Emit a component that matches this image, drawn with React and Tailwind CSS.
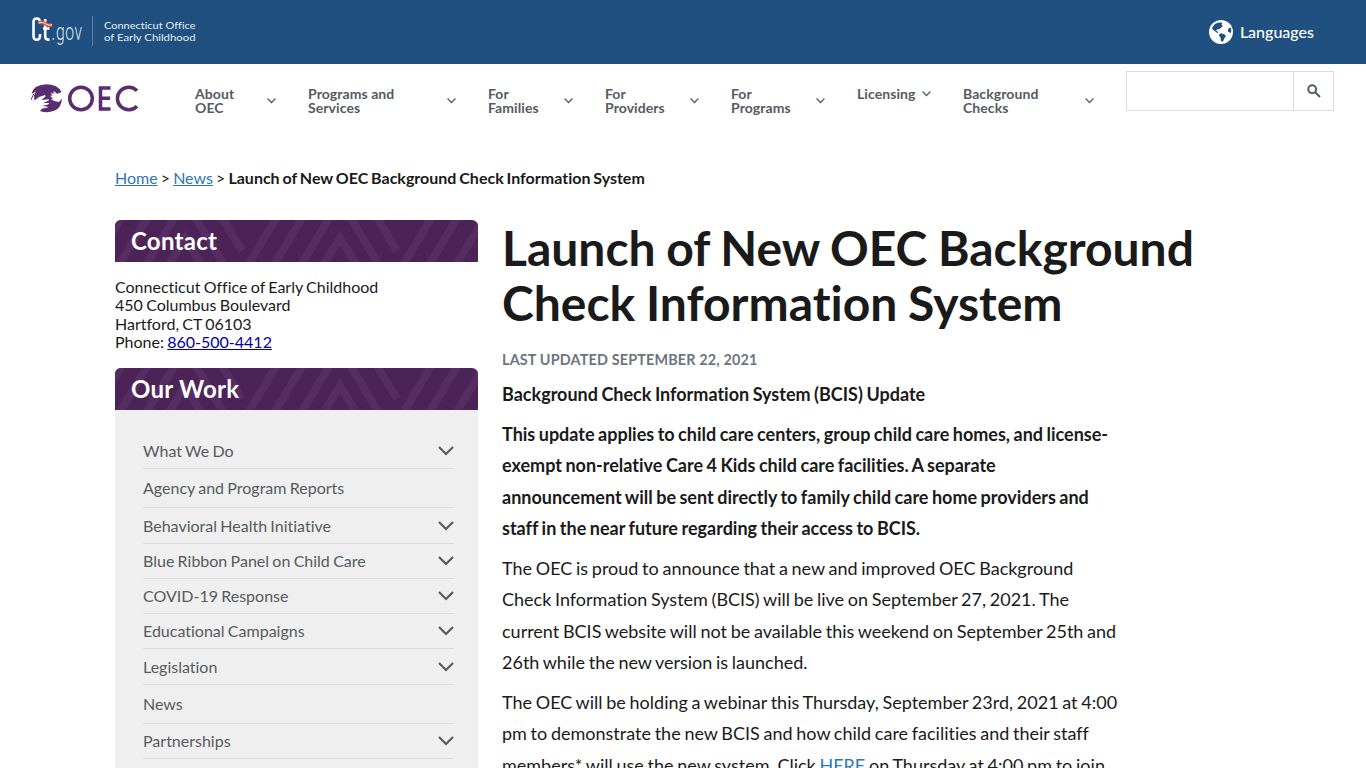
import React from "react";

const navItems = [
  { lines: ["About", "OEC"], width: "w-[81px]" },
  { lines: ["Programs and", "Services"], width: "w-[148px]" },
  { lines: ["For", "Families"], width: "w-[85px]" },
  { lines: ["For", "Providers"], width: "w-[94px]" },
  { lines: ["For", "Programs"], width: "w-[94px]" },
  { lines: ["Licensing"], width: "w-[74px]" },
  { lines: ["Background", "Checks"], width: "w-[131px]" },
];

const workItems = [
  { label: "What We Do", height: "h-[36px]", open: true },
  { label: "Agency and Program Reports", height: "h-[39px]" },
  { label: "Behavioral Health Initiative", height: "h-[36px]", open: true },
  { label: "Blue Ribbon Panel on Child Care", height: "h-[35px]", open: true },
  { label: "COVID-19 Response", height: "h-[35px]", open: true },
  { label: "Educational Campaigns", height: "h-[35px]", open: true },
  { label: "Legislation", height: "h-[36px]", open: true },
  { label: "News", height: "h-[39px]" },
  { label: "Partnerships", height: "h-[35px]", open: true },
  { label: "Press Room", height: "h-[39px]" },
];

const CtLogo = () => (
  <svg width="166" height="34" viewBox="0 0 166 34" fill="none">
    {/* Ct mark */}
    <g stroke="#fff" strokeWidth="2.6">
      <path d="M9 8V6Q9 2.500 5.700 2.500Q2.500 2.500 2.500 6V20Q2.500 23.800 5.700 23.800Q9 23.800 9 20V18" />
      <path d="M14.200 3V20Q14.200 23.600 17 23.600H18.500M12 12.500H18.500" />
    </g>
    <path d="M8 6.800Q11.500 5.500 14.500 7.800Q17.500 10 21 8.800" stroke="#e8483f" strokeWidth="3.600" />
    <path d="M8 6.800Q11.500 5.500 14.500 7.800Q17.500 10 21 8.800" stroke="#fff" strokeWidth="0.900" />
    <g transform="translate(20.500 24) scale(0.68 1)">
      <text fill="#dbe6f0" fontSize="23" fontWeight="300" textLength="45" className="font-['Roboto']">.gov</text>
    </g>
    <path d="M61.500 0V30" stroke="#5c7fa3" />
    <text x="73" y="13" fill="#e6edf5" fontSize="10" textLength="91.500" lengthAdjust="spacingAndGlyphs" className="font-['Lato']">Connecticut Office</text>
    <text x="73" y="24.500" fill="#e6edf5" fontSize="10" textLength="91.500" lengthAdjust="spacingAndGlyphs" className="font-['Lato']">of Early Childhood</text>
  </svg>
);

const OecLogo = () => (
  <svg width="108" height="30" viewBox="0 0 108 30" fill="none">
    {/* left hand with its wrist, cut out by the white fingers */}
    <path d="M0.500 10Q2 1 15 0.200Q27 0.500 30.500 8L26 10L23 9L21.500 10.500L20.500 13L23 17L28 18L30.800 14.500Q30.500 27.500 16 28.200Q12 28.200 9 27Q9.500 25.500 11.500 24.500L17 23.500L16 22.500L11 22L17 20.500L18.500 19L12 19L17.500 16.800L18 15.200L10.500 16L14.500 12.500L14 11L8 13L3.500 16.500L3 11.500L5 7.500Z" fill="#5a2d73" />
    <path d="M0 16L1 13.500L3 9.500" stroke="#5a2d73" strokeWidth="1" />
    <path d="M20.500 9.500L26 13L31 12M20 12L24 14.500M21 15.500L26 16.500M23 8L27 11.500" stroke="#fff" strokeWidth="1.200" strokeLinecap="round" />
    <g stroke="#5a2d73" strokeWidth="3.500">
      <circle cx="50" cy="14.500" r="11.300" />
      <path d="M79.500 4H69.500V25H79.500M69.500 14.300H79" />
      <path d="M106 6.800A11.300 11.300 0 1 0 106 22.200" />
    </g>
  </svg>
);

const Globe = () => (
  <svg width="24" height="24" viewBox="0 0 24 24">
    <circle cx="12" cy="12" r="12" fill="#fff" />
    <path
      fill="#20507f"
      d="M3.300 7.500L6 4L9.500 2.500L13.500 2.800L12.500 4.500L13.800 6L12 7.800L10 9.300L8.500 9.200L7 10.500L8.500 11.500L9.500 13L8 12.800L5 10.600L3.500 9.500ZM10.500 14L12.500 13.200L15.500 14.500L17 16L15.500 18L14.500 20.500L13 22L11.800 20.500L11.500 17.500L10 15.500ZM18.800 9.800L20.500 7.800L21.800 8L22.300 10.500L21.800 13L20.500 12.600L19 11.500Z"
    />
  </svg>
);

const Chevron = ({ size, className }) => (
  <svg
    width={size}
    height={size * 0.625}
    viewBox="0 0 16 10"
    fill="none"
    stroke="#555b5e"
    strokeWidth="2.200"
    className={className}
  >
    <path d="M1 1L8 8L15 1" />
  </svg>
);

const PanelTitle = ({ children }) => (
  <div className="relative h-[42px] overflow-hidden rounded-t-md bg-[#4c2357] px-4">
    <svg className="absolute inset-0" width="363" height="42" fill="none" stroke="#562d62" strokeWidth="8">
      {[-310, -155, 0, 155].map((x) => (
        <path
          key={x}
          transform={`translate(${x} 0)`}
          d="M106 -4L127 31M162.500 -4L132.500 46M188.500 -4L158.500 46M215.500 -4L185.500 46M208 46L225 18L242 46M234.500 -4L264.500 46"
        />
      ))}
    </svg>
    <h2 className="relative text-2xl leading-[42px] font-bold tracking-[0.25px] text-white">{children}</h2>
  </div>
);

const Header = () => (
  <header>
    <div className="flex h-16 items-start justify-between bg-[#20507f] pr-[52px] pl-[31px]">
      <div className="pt-4">
        <CtLogo />
      </div>
      <div className="flex items-center gap-[7px] pt-5 text-base leading-6 text-white">
        <Globe />
        <span className="font-medium">Languages</span>
      </div>
    </div>

    <div className="flex h-[72px] items-start pl-[31px]">
      <div className="w-[164px] pt-5">
        <OecLogo />
      </div>
      <nav className="flex gap-8 pt-[23px]">
        {navItems.map((item) => (
          <a
            key={item.lines.join(" ")}
            className={`flex items-center justify-between text-sm leading-[14px] font-bold tracking-[0.08px] text-[#555b5e] ${item.width}`}
          >
            <span className="self-start whitespace-nowrap">
              {item.lines.map((line) => (
                <span key={line} className="block">{line}</span>
              ))}
            </span>
            <Chevron size={9} className={item.lines.length === 1 ? "mt-1 shrink-0 self-start" : "shrink-0"} />
          </a>
        ))}
      </nav>
      <div className="mt-[7px] ml-8 flex h-10 w-[208px] border border-[#dcdcdc]">
        <input className="w-[166px] outline-none" aria-label="Search" />
        <button className="flex flex-1 items-center justify-center border-l border-[#dcdcdc]" aria-label="Submit">
          <svg width="14" height="14" viewBox="0 0 14 14" fill="none" stroke="#555b5e" strokeWidth="2">
            <circle cx="5.200" cy="5.200" r="3.900" />
            <path d="M8.200 8.200L13 13" />
          </svg>
        </button>
      </div>
    </div>
  </header>
);

const Sidebar = () => (
  <aside className="w-[363px] shrink-0">
    <PanelTitle>Contact</PanelTitle>
    <p className="mt-4 h-[90px] text-base leading-[18.4px] [word-spacing:-0.8px]">
      Connecticut Office of Early Childhood
      <br />
      450 Columbus Boulevard
      <br />
      Hartford, CT 06103
      <br />
      Phone: <a className="text-[#0000a8] underline">860-500-4412</a>
    </p>
    <PanelTitle>Our Work</PanelTitle>
    <ul className="bg-[#efefef] pt-[23px] pr-6 pb-6 pl-7">
      {workItems.map((item) => (
        <li
          key={item.label}
          className={`flex items-center justify-between border-b border-[#dcdcdc] text-base leading-none [word-spacing:-0.8px] text-[#555b5e] ${item.height}`}
        >
          <span>{item.label}</span>
          {item.open && <Chevron size={16} />}
        </li>
      ))}
    </ul>
  </aside>
);

const Article = () => (
  <article>
    <h1 className="text-5xl leading-[55.2px] font-bold [word-spacing:-1px]">
      Launch of New OEC Background
      <br />
      Check Information System
    </h1>
    <p className="mt-5 text-[14.4px] leading-5 font-bold tracking-[0.16px] text-[#6c757d] uppercase">
      Last updated September 22, 2021
    </p>
    <div className="mt-[9px] space-y-2 text-lg leading-[31.5px] whitespace-nowrap [word-spacing:-0.9px]">
      <p className="font-bold">Background Check Information System (BCIS) Update</p>
      <p className="font-bold">
        This update applies to child care centers, group child care homes, and license-
        <br />
        exempt non-relative Care 4 Kids child care facilities. A separate
        <br />
        announcement will be sent directly to family child care home providers and
        <br />
        staff in the near future regarding their access to BCIS.
      </p>
      <p>
        The OEC is proud to announce that a new and improved OEC Background
        <br />
        Check Information System (BCIS) will be live on September 27, 2021. The
        <br />
        current BCIS website will not be available this weekend on September 25th and
        <br />
        26th while the new version is launched.
      </p>
      <p>
        The OEC will be holding a webinar this Thursday, September 23rd, 2021 at 4:00
        <br />
        pm to demonstrate the new BCIS and how child care facilities and their staff
        <br />
        members* will use the new system. Click <a className="text-[#2d76b8]">HERE</a> on Thursday at 4:00 pm to join.
      </p>
    </div>
  </article>
);

const App = () => {
  return (
    <div className="h-screen overflow-hidden bg-white font-['Lato',sans-serif] text-[#1a1a1a] [font-variant-ligatures:none]">
      <Header />
      <main className="pl-[115px]">
        <div className="pt-[30px] text-base leading-6 [word-spacing:-1px]">
          <a className="text-[#2d76b8] underline">Home</a> &gt; <a className="text-[#2d76b8] underline">News</a> &gt;{" "}
          <span className="font-bold">Launch of New OEC Background Check Information System</span>
        </div>
        <div className="flex gap-6 pt-[30px]">
          <Sidebar />
          <Article />
        </div>
      </main>
    </div>
  );
};

export default App;
